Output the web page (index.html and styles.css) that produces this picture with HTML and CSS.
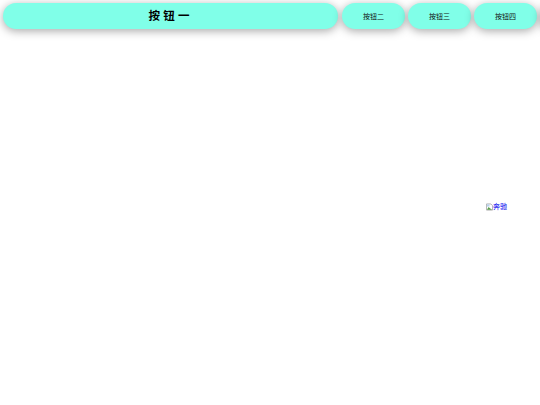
FILE: index.html
```html
<!DOCTYPE html>
<html lang="zh-CN">
<head>
    <meta charset="UTF-8">
    <title>按钮</title>
    <link rel="stylesheet" href="styles.css">
</head>
<body>

<nav class="menu">
    <a class="btn btn-main">按 钮 一</a>
    <a class="btn">按钮二</a>
    <a class="btn">按钮三</a>
    <a class="btn">按钮四</a>
    <a class="btn"></a>
</nav>

<div class="content">
    <a class="pic-link" href="#">
        <svg class="broken" width="7" height="8" viewBox="0 0 8 8">
            <path d="M0.5 0.5H5.5L7.5 2.5V7.5H0.5Z" fill="#fff" stroke="#a9a9a9"/>
            <path d="M1 7L3 4L4.5 5.5L7 7Z" fill="#5a9e4b"/>
            <rect x="1" y="1" width="3" height="2.5" fill="#b9d2ee"/>
        </svg>奔驰
    </a>
</div>

</body>
</html>
```

FILE: styles.css
```css
body {
    margin: 0;
    background-color: white;
    font-family: "Liberation Sans", "Noto Sans CJK SC", sans-serif;
}
.menu {
    display: flex;
    gap: 3px;
    padding: 3px 0 16px 3px;
    overflow: hidden;
}
.btn {
    flex: none;
    width: 63px;
    height: 26px;
    line-height: 28px;
    text-align: center;
    font-size: 7px;
    color: #111;
    background-color: #80ffe8;
    border-radius: 13px;
    box-shadow: 0 2px 10px rgba(0, 0, 0, 0.35);
}
.btn-main {
    box-sizing: border-box;
    width: 335px;
    margin-right: 1px;
    padding-right: 3px;
    line-height: 26px;
    font-size: 11.5px;
    font-weight: bold;
    color: black;
}
.content {
    display: flex;
    justify-content: flex-end;
    padding: 157px 33px 0 0;
}
.pic-link {
    display: flex;
    align-items: center;
    font-size: 7px;
    line-height: 9px;
    color: #0000ee;
    text-decoration: none;
}
.broken {
    flex: none;
}
```
